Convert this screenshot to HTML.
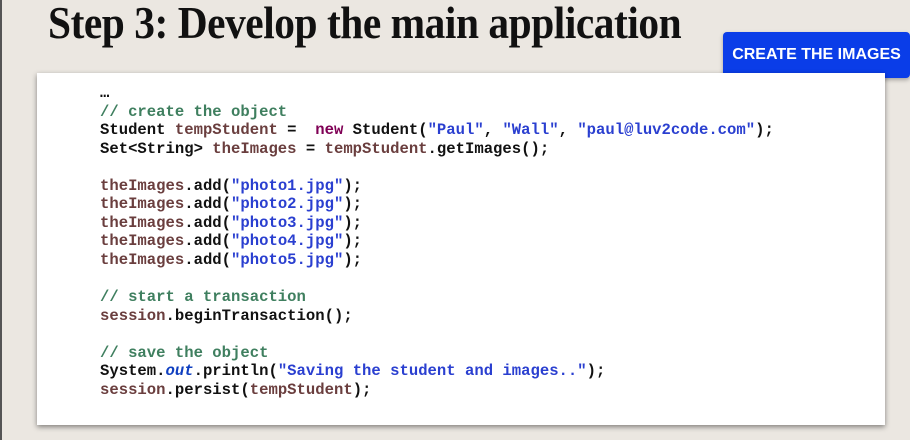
<!DOCTYPE html>
<html><head><style>
body{margin:0;width:910px;height:440px;background:#ebe7e1;position:relative;overflow:hidden;font-family:"Liberation Sans",sans-serif}
.edge{position:absolute;left:0;top:0;width:2px;height:440px;background:#555}
h1{position:absolute;left:48px;top:-3px;margin:0;font-family:"Liberation Serif",serif;font-weight:bold;font-size:45px;color:#111;white-space:nowrap;transform:scaleX(0.92);transform-origin:left top;letter-spacing:-0.5px}
.btn{position:absolute;left:723px;top:32px;width:187px;height:46px;background:#0a3de8;border-radius:4px;color:#fff;font-weight:bold;font-size:16px;line-height:46px;text-align:center;box-shadow:0 2px 4px rgba(0,0,0,.3)}
.box{position:absolute;left:37px;top:73px;width:848px;height:352px;background:#fff;box-shadow:0 2px 5px rgba(0,0,0,.45)}
pre{position:absolute;left:100px;top:84px;margin:0;font-family:"Liberation Mono",monospace;font-weight:bold;font-size:15.6px;line-height:18.55px;color:#111}
.c{color:#3f7f5f;font-weight:bold}.v{color:#6a3e3e}.s{color:#2a3fd0}.k{color:#7f0055}.i{color:#0f3fc0;font-style:italic}
</style></head><body>
<div class="edge"></div>
<h1>Step 3: Develop the main application</h1>
<div class="btn">CREATE THE IMAGES</div>
<div class="box"></div>
<pre>…
<span class="c">// create the object</span>
Student <span class="v">tempStudent</span> =  <span class="k">new</span> Student(<span class="s">"Paul"</span>, <span class="s">"Wall"</span>, <span class="s">"paul@luv2code.com"</span>);
Set&lt;String&gt; <span class="v">theImages</span> = <span class="v">tempStudent</span>.getImages();

<span class="v">theImages</span>.add(<span class="s">"photo1.jpg"</span>);
<span class="v">theImages</span>.add(<span class="s">"photo2.jpg"</span>);
<span class="v">theImages</span>.add(<span class="s">"photo3.jpg"</span>);
<span class="v">theImages</span>.add(<span class="s">"photo4.jpg"</span>);
<span class="v">theImages</span>.add(<span class="s">"photo5.jpg"</span>);

<span class="c">// start a transaction</span>
<span class="v">session</span>.beginTransaction();

<span class="c">// save the object</span>
System.<span class="i">out</span>.println(<span class="s">"Saving the student and images.."</span>);
<span class="v">session</span>.persist(<span class="v">tempStudent</span>);</pre>
</body></html>
